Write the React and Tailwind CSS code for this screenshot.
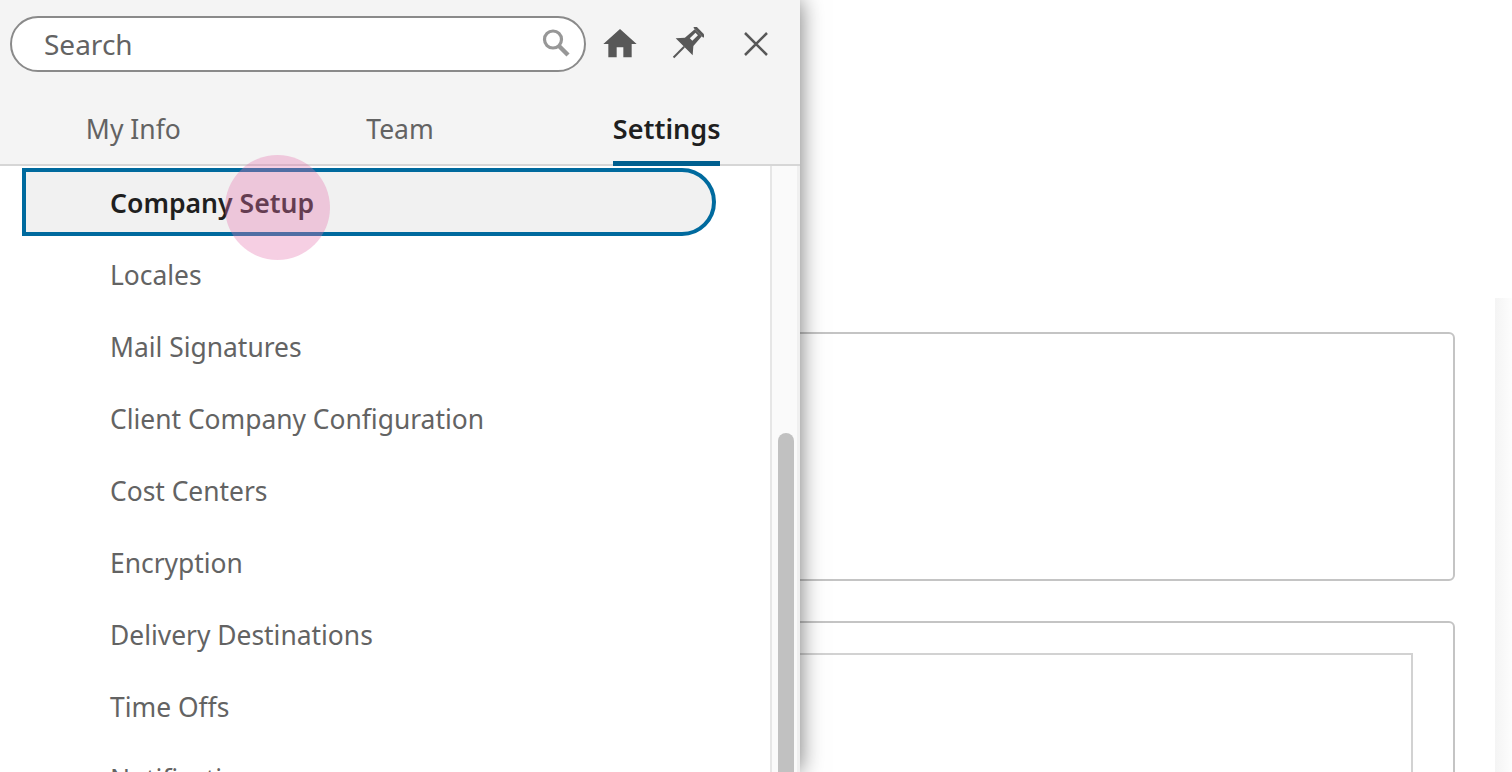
import React from 'react';
import { MdHome } from 'react-icons/md';

const items = [
  'Company Setup',
  'Locales',
  'Mail Signatures',
  'Client Company Configuration',
  'Cost Centers',
  'Encryption',
  'Delivery Destinations',
  'Time Offs',
  'Notifications',
];

const SearchIcon = () => (
  <svg viewBox="0 0 30 30" className="absolute right-[15px] top-[12px] w-[30px] h-[30px]" fill="none" stroke="#979797">
    <circle cx="12" cy="11.5" r="8.5" strokeWidth="3.2" />
    <path d="M18 18l9 9" strokeWidth="4.4" />
  </svg>
);

const PinIcon = () => (
  <svg viewBox="-17 -17 34 34" className="w-[34px] h-[34px]">
    <g transform="rotate(45)" fill="#585858">
      <rect x="-7" y="-19" width="14" height="3" />
      <path d="M-5 -16H5L6 -3L12 4H-12L-6 -3Z" />
      <rect x="-2" y="-14" width="3.5" height="8" fill="#f4f4f4" />
      <rect x="-1" y="4" width="2" height="15" />
    </g>
  </svg>
);

const CloseIcon = () => (
  <svg viewBox="0 0 26 26" className="w-[26px] h-[26px]" fill="none" stroke="#585858" strokeWidth="2.5">
    <path d="M2 2l22 22M24 2L2 24" />
  </svg>
);

const Panel = () => (
  <aside className="absolute left-0 top-0 bottom-0 w-[800px] flex flex-col bg-white shadow-[0_0_22px_rgba(0,0,0,0.55)]">
    <header className="h-[166px] shrink-0 bg-[#f4f4f4] border-b-2 border-[#d6d6d6]">
      <div className="flex items-center pl-[10px] pt-[16px]">
        <div className="relative w-[576px] h-[56px]">
          <input
            placeholder="Search"
            className="w-full h-full rounded-full border-2 border-[#8a8a8a] bg-white pl-[32px] text-[28px] text-[#636363] placeholder:text-[#636363] outline-none"
          />
          <SearchIcon />
        </div>
        <MdHome className="ml-[14px] w-[40px] h-[40px] text-[#585858]" />
        <span className="ml-[30px]"><PinIcon /></span>
        <span className="ml-[39px]"><CloseIcon /></span>
      </div>
      <nav className="grid grid-cols-3 mt-[34px] h-[60px] text-[26.5px] text-[#636363]">
        <div className="flex justify-center"><span className="h-[60px] leading-[46px]">My Info</span></div>
        <div className="flex justify-center"><span className="h-[60px] leading-[46px]">Team</span></div>
        <div className="flex justify-center">
          <span className="h-[60px] leading-[46px] text-[27px] font-semibold text-[#1f1f1f] border-b-[5px] border-[#005f8f]">Settings</span>
        </div>
      </nav>
    </header>
    <div className="flex flex-1 min-h-0 overflow-hidden">
      <ul className="flex-1 min-w-0 text-[26.4px] text-[#636363]">
        {items.map((item, i) => (
          i === 0 ? (
            <li
              key={item}
              className="relative flex items-center h-[68px] mt-[2px] mb-[3px] ml-[22px] mr-[54px] pl-[84px] pt-[3px] border-4 border-[#006a9e] rounded-r-[34px] bg-[#f1f1f1] font-semibold text-[#1f1f1f] text-[26.6px]"
            >
              {item}
            </li>
          ) : (
            <li key={item} className="flex items-center h-[72px] pl-[110px] pt-[2px]">{item}</li>
          )
        ))}
      </ul>
      <div className="relative w-[30px] shrink-0 bg-[#fafafa] border-l-2 border-r-[3px] border-l-[#e6e6e6] border-r-[#f0f0f0]">
        <div className="absolute left-[6px] top-[267px] bottom-0 w-[16px] bg-[#c1c1c1] rounded-t-[8px]" />
      </div>
    </div>
  </aside>
);

export default function App() {
  return (
    <div className="relative h-screen overflow-hidden bg-white font-['Noto_Sans',sans-serif]">
      <main className="flex justify-end h-full pt-[298px]">
        <div className="flex flex-col gap-[40px] w-[755px] mr-[40px] pt-[34px]">
          <section className="h-[249px] shrink-0 border-2 border-[#c4c4c4] rounded-[6px]" />
          <section className="h-[300px] shrink-0 border-2 border-[#c4c4c4] rounded-[6px] pt-[30px] pr-[40px]">
            <div className="h-[260px] border-2 border-[#d2d2d2]" />
          </section>
        </div>
        <div className="w-[17px] bg-gradient-to-r from-[#f4f4f4] to-[#fdfdfd]" />
      </main>
      <Panel />
      <div className="absolute left-[225px] top-[155px] w-[105px] h-[105px] rounded-full bg-[rgba(228,118,175,0.35)]" />
    </div>
  );
}
